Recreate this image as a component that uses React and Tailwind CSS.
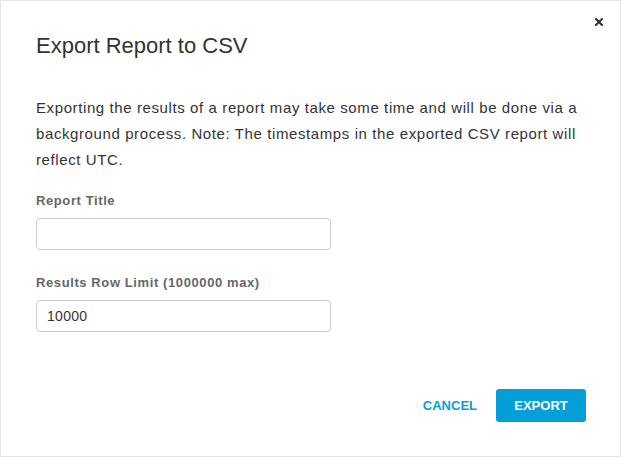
export default function App() {
  return (
    <div className="w-[622px] h-[458px] bg-white" style={{ fontFamily: '"Liberation Sans", Arial, sans-serif' }}>
      <div className="relative w-[621px] h-[457px] border border-[#e4e4e4] bg-white">
        {/* close */}
        <button className="absolute top-[16px] right-[17px] w-[9px] h-[9px] flex items-center justify-center" aria-label="Close">
          <svg width="8" height="8" viewBox="0 0 8 8">
            <path d="M1 1L7 7M7 1L1 7" stroke="#333" strokeWidth="2" strokeLinecap="square" />
          </svg>
        </button>

        <div className="pl-[35px] pr-[28px] pt-[32px]">
          <h2 className="text-[22px] leading-[26px] tracking-[0px] text-[#333]">Export Report to CSV</h2>

          <p className="mt-[36px] text-[15px] leading-[26px] tracking-[0.6px] text-[#333]">
            Exporting the results of a report may take some time and will be done via a background process. Note: The timestamps in the exported CSV report will reflect UTC.
          </p>

          <div className="mt-[19px] flex flex-col">
            <label className="text-[13px] leading-[18px] font-bold tracking-[0.6px] text-[#666]">Report Title</label>
            <input
              type="text"
              className="mt-[8px] w-[295px] h-[32px] rounded-[4px] border border-[#cccccc] px-[10px] text-[14px] text-[#333] outline-none"
            />
            <label className="mt-[24px] text-[13px] leading-[18px] font-bold tracking-[0.6px] text-[#666]">Results Row Limit (1000000 max)</label>
            <input
              type="text"
              defaultValue="10000"
              className="mt-[8px] w-[295px] h-[32px] rounded-[4px] border border-[#cccccc] px-[10px] text-[14px] tracking-[0.3px] text-[#333] outline-none"
            />
          </div>
        </div>

        <div className="mt-[57px] pr-[34px] flex justify-end items-center gap-[19px]">
          <button className="text-[13px] font-bold text-[#049fd9] uppercase">Cancel</button>
          <button className="w-[90px] h-[33px] rounded-[3px] bg-[#049fd9] text-[13px] font-bold text-white uppercase">Export</button>
        </div>
      </div>
    </div>
  );
}
